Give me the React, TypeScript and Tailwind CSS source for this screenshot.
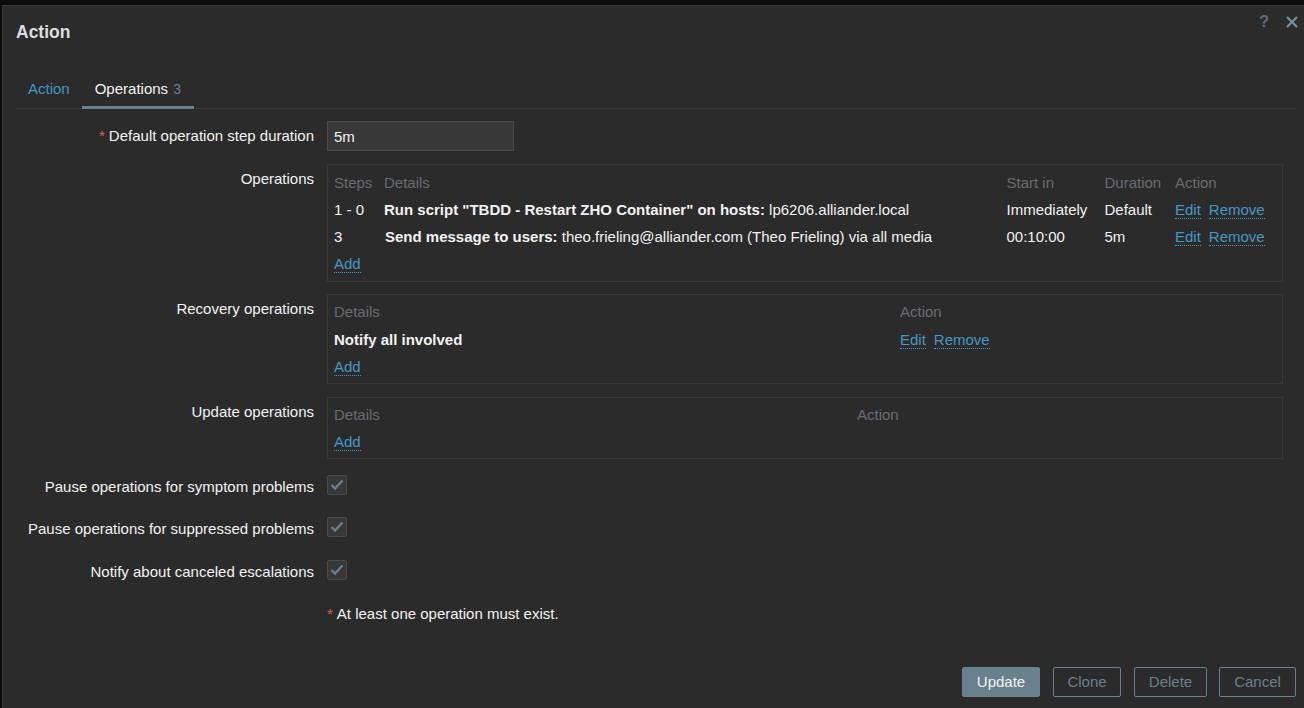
const operations = [
  { steps: '1 - 0', bold: 'Run script "TBDD - Restart ZHO Container" on hosts:', rest: 'lp6206.alliander.local', start: 'Immediately', duration: 'Default', inset: '' },
  { steps: '3', bold: 'Send message to users:', rest: 'theo.frieling@alliander.com (Theo Frieling) via all media', start: '00:10:00', duration: '5m', inset: 'pl-px' },
]

const checks = [
  { label: 'Pause operations for symptom problems', cls: 'mt-[16px]' },
  { label: 'Pause operations for suppressed problems', cls: 'mt-[22px]' },
  { label: 'Notify about canceled escalations', cls: 'mt-[23px]' },
]

function Link({ children }: { children: React.ReactNode }) {
  return <a className="text-[#4796c4] border-b border-dotted border-[#4796c4] leading-[17px] inline-block">{children}</a>
}

function Actions() {
  return (
    <div className="flex items-start gap-2">
      <Link>Edit</Link>
      <Link>Remove</Link>
    </div>
  )
}

function Head({ children, className = '' }: { children?: React.ReactNode; className?: string }) {
  return <div className={`text-[#686c71] ${className}`}>{children}</div>
}

function Row({ label, required, className = '', labelClass = '', children }: { label: string; required?: boolean; className?: string; labelClass?: string; children: React.ReactNode }) {
  return (
    <div className={`flex ${className}`}>
      <div className={`w-[311px] shrink-0 text-right pr-[13px] whitespace-nowrap ${labelClass}`}>
        {required && <span className="text-[#e45959] mr-[4px]">*</span>}
        {label}
      </div>
      {children}
    </div>
  )
}

function Button({ children, primary, className = '' }: { children: string; primary?: boolean; className?: string }) {
  return (
    <button className={`h-[30px] rounded-[2px] border border-[#69808d] ${primary ? 'bg-[#69808d] text-[#f2f2f2]' : 'text-[#69808d]'} ${className}`}>
      {children}
    </button>
  )
}

export default function App() {
  return (
    <div className="h-[708px] w-[1304px] overflow-hidden bg-[#0b0c0e] pt-[5px] pl-[2px] font-['Liberation_Sans',Arial,sans-serif] text-[15px] leading-[18px] text-[#f2f2f2]">
      <div className="relative h-[703px] border-t border-l border-[#383838] bg-[#2b2b2b] pl-[13px] pr-[8px]">
        <div className="absolute top-[10px] right-[6px] flex items-center gap-[17px] text-[#5f6e78]">
          <span className="text-[16px] font-bold leading-[12px]">?</span>
          <svg width="12" height="12" viewBox="0 0 12 12" fill="none" stroke="#768d99" strokeWidth="2.4">
            <path d="M1 1l10 10M11 1L1 11" />
          </svg>
        </div>

        <h4 className="pt-[16px] text-[17.5px] font-bold leading-[21px] text-[#dddddd]">Action</h4>

        <div className="mt-[20px] flex h-[46px] items-end border-b border-[#383838]">
          <a className="px-[12px] pb-[10px] text-[#4796c4]">Action</a>
          <div className="relative -mb-px px-[13px] pb-[8px] border-b-[3px] border-[#69808d]">
            Operations <span className="ml-[1px] text-[14px] text-[#69808d]">3</span>
          </div>
        </div>

        <Row label="Default operation step duration" required className="mt-[12px] items-center">
          <div className="flex h-[30px] w-[187px] items-center border border-[#4a4a4a] bg-[#383838] px-[6px] pt-px">5m</div>
        </Row>

        <Row label="Operations" className="mt-[13px]" labelClass="pt-[6px]">
          <div className="h-[118px] w-[956px] border border-[#383838] px-[6px] pt-[9px]">
            <div className="grid grid-cols-[50px_622.5px_98px_70.5px_1fr] auto-rows-[27px]">
              <Head>Steps</Head>
              <Head>Details</Head>
              <Head>Start in</Head>
              <Head>Duration</Head>
              <Head>Action</Head>
              {operations.map((op) => (
                <div key={op.steps} className="contents">
                  <div>{op.steps}</div>
                  <div className={op.inset}><b>{op.bold}</b> {op.rest}</div>
                  <div>{op.start}</div>
                  <div>{op.duration}</div>
                  <Actions />
                </div>
              ))}
              <div><Link>Add</Link></div>
            </div>
          </div>
        </Row>

        <Row label="Recovery operations" className="mt-[12px]" labelClass="pt-[6px]">
          <div className="h-[90px] w-[956px] border border-[#383838] px-[6px] pt-[8px]">
            <div className="grid grid-cols-[566px_1fr] auto-rows-[27.5px]">
              <Head>Details</Head>
              <Head>Action</Head>
              <div className="font-bold">Notify all involved</div>
              <Actions />
              <div><Link>Add</Link></div>
            </div>
          </div>
        </Row>

        <Row label="Update operations" className="mt-[13px]" labelClass="pt-[6px]">
          <div className="h-[62px] w-[956px] border border-[#383838] px-[6px] pt-[8px]">
            <div className="grid grid-cols-[523px_1fr] auto-rows-[27px]">
              <Head>Details</Head>
              <Head>Action</Head>
              <div><Link>Add</Link></div>
            </div>
          </div>
        </Row>

        {checks.map((c) => (
          <Row key={c.label} label={c.label} className={c.cls} labelClass="h-[20px] pt-[3px]">
            <div className="flex h-[20px] w-[20px] items-center justify-center rounded-[2px] border border-[#4a4a4a] bg-[#383838]">
              <svg width="14" height="12" viewBox="0 0 14 12" fill="none" stroke="#69808d" strokeWidth="2.4">
                <path d="M1.5 6L5 9.5l7.5-8" />
              </svg>
            </div>
          </Row>
        ))}

        <div className="mt-[25px] ml-[311px]">
          <span className="text-[#e45959] mr-[4px]">*</span>At least one operation must exist.
        </div>

        <div className="mt-[44px] flex justify-end gap-[13px]">
          <Button primary className="w-[78px]">Update</Button>
          <Button className="w-[68px]">Clone</Button>
          <Button className="w-[73px] mr-[-1px]">Delete</Button>
          <Button className="w-[77px]">Cancel</Button>
        </div>
      </div>
    </div>
  )
}
